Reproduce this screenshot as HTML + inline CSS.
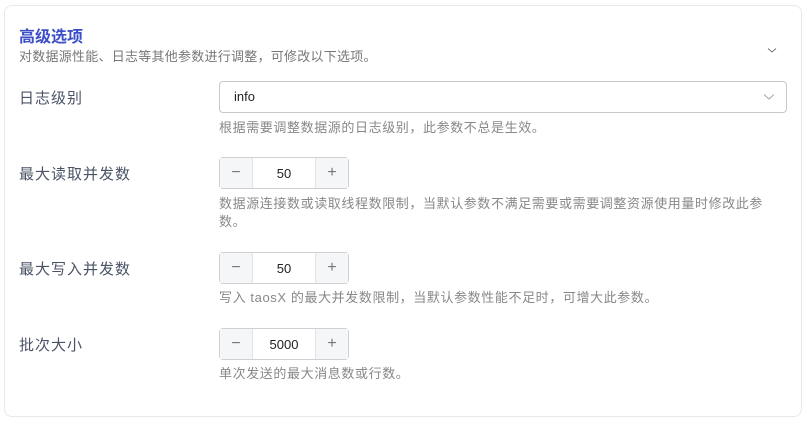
<!DOCTYPE html>
<html><head><meta charset="utf-8"><style>
*{margin:0;padding:0;box-sizing:border-box}
body{width:807px;height:424px;background:#fff;font-family:"Liberation Sans","Noto Sans CJK SC",sans-serif;position:relative;overflow:hidden}
.card{position:absolute;left:4px;top:5px;width:798px;height:412px;border:1px solid #e8e8ec;border-radius:8px}
.a{position:absolute;white-space:nowrap}
.title{left:19px;top:23px;font-size:16px;color:#3d4fc8;font-weight:bold}
.sub{left:19px;top:46px;font-size:13px;color:#777;letter-spacing:0.25px}
.lab{left:19px;font-size:15px;color:#4a5366;letter-spacing:1px}
.help{left:219px;font-size:13px;color:#888;line-height:18px;letter-spacing:0.6px;width:575px;white-space:normal}
.sel{left:219px;top:81px;width:568px;height:32px;border:1px solid #c8c8cc;border-radius:4px;font-size:13px;color:#222;padding:7px 14px}
.num{left:219px;width:130px;height:32px;border:1px solid #cfcfd4;border-radius:4px;display:flex;font-size:13px;color:#222}
.num .b{width:32px;background:#f5f6f8;display:flex;align-items:center;justify-content:center;color:#777;font-size:16px;font-weight:300}
.num .v{flex:1;display:flex;align-items:center;justify-content:center;border-left:1px solid #e3e3e6;border-right:1px solid #e3e3e6}
</style></head><body>
<div class="card"></div>
<div class="a title">高级选项</div>
<div class="a sub">对数据源性能、日志等其他参数进行调整，可修改以下选项。</div>
<svg class="a" style="left:767px;top:47px" width="10" height="7"><path d="M1 1.5 5 5 9 1.5" fill="none" stroke="#777" stroke-width="1"/></svg>
<div class="a lab" style="top:87px">日志级别</div>
<div class="a sel">info</div>
<svg class="a" style="left:763px;top:93px" width="12" height="8"><path d="M1 1.5 6 6 11 1.5" fill="none" stroke="#aaa" stroke-width="1.1"/></svg>
<div class="a help" style="top:119px">根据需要调整数据源的日志级别，此参数不总是生效。</div>
<div class="a lab" style="top:163px">最大读取并发数</div>
<div class="a num" style="top:157px"><div class="b">−</div><div class="v">50</div><div class="b">+</div></div>
<div class="a help" style="top:195px">数据源连接数或读取线程数限制，当默认参数不满足需要或需要调整资源使用量时修改此参<br>数。</div>
<div class="a lab" style="top:258px">最大写入并发数</div>
<div class="a num" style="top:252px"><div class="b">−</div><div class="v">50</div><div class="b">+</div></div>
<div class="a help" style="top:289px">写入 taosX 的最大并发数限制，当默认参数性能不足时，可增大此参数。</div>
<div class="a lab" style="top:334px">批次大小</div>
<div class="a num" style="top:328px"><div class="b">−</div><div class="v">5000</div><div class="b">+</div></div>
<div class="a help" style="top:365px">单次发送的最大消息数或行数。</div>
</body></html>
